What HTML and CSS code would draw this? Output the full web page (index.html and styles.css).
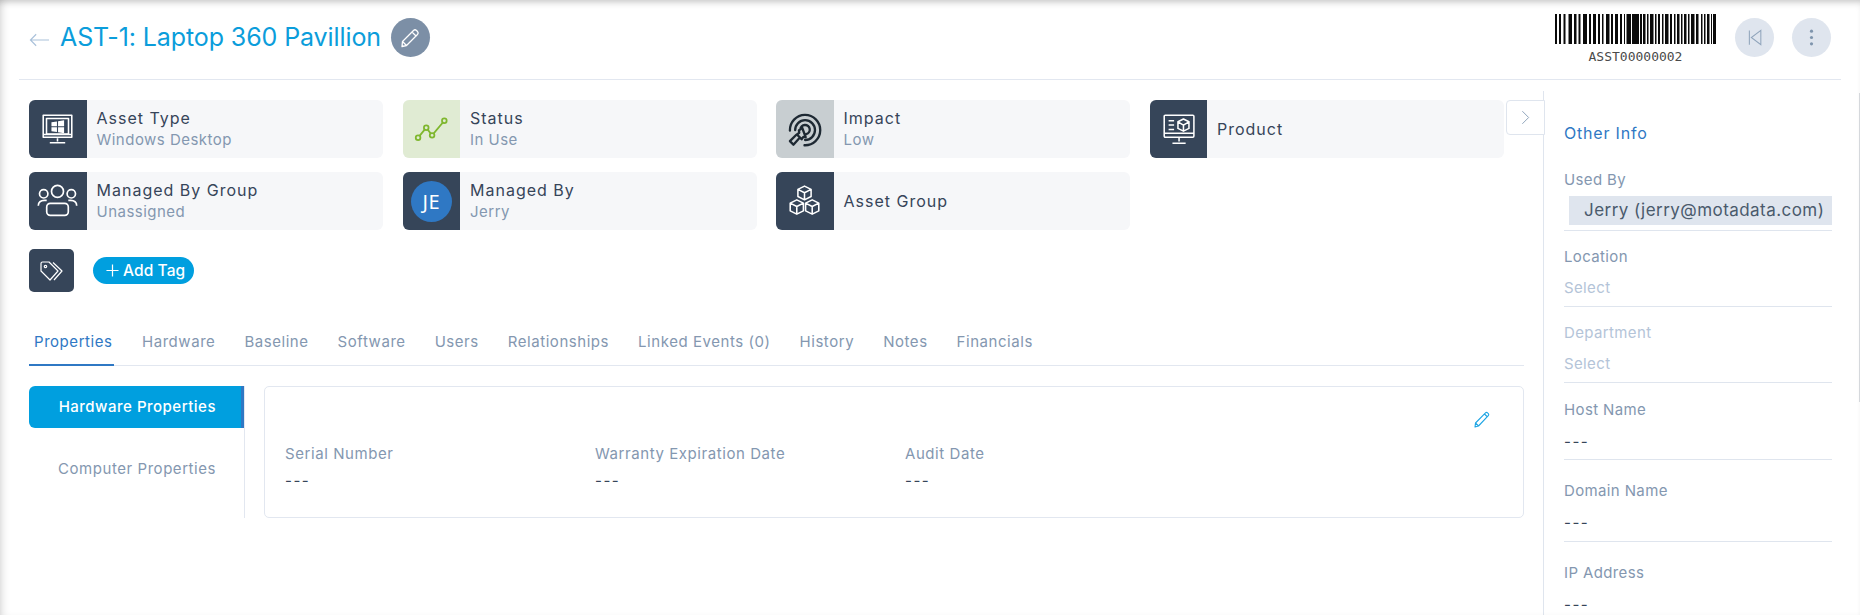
FILE: index.html
```html
<!DOCTYPE html>
<html lang="en">
<head>
<meta charset="utf-8">
<title>AST-1: Laptop 360 Pavillion</title>
<link rel="stylesheet" href="styles.css">
</head>
<body>
<div class="page">
  <header class="header">
    <svg class="back" viewBox="0 0 22 14"><path d="M21 7H1.500M7.500 1 1.500 7l6 6"/></svg>
    <h1 class="title">AST-1: Laptop 360 Pavillion</h1>
    <button class="round edit"><svg viewBox="0 0 24 24"><path d="M4.500 15.500 15.500 4.500a2.200 2.200 0 0 1 3 0l1 1a2.200 2.200 0 0 1 0 3L8.500 19.500 4 20.500zM14 6l4.500 4.500M4.500 15.500l4 4"/></svg></button>
    <div class="spacer"></div>
    <div class="barcode">
      <svg class="bars" viewBox="0 0 161 30" preserveAspectRatio="none"><path d="M0 0h2v30H0zM4 0h2v30H4zM8.500 0h2v30h-2zM13.500 0h3.500v30h-3.500zM19 0h2.500v30H19zM23.500 0h2v30h-2zM28 0h4v30h-4zM34 0h2v30h-2zM38 0h3v30h-3zM43 0h2v30h-2zM47 0h1.500v30H47zM51 0h3.500v30H51zM56 0h2v30h-2zM60 0h3v30h-3zM65 0h2v30h-2zM69 0h1v30h-1zM71.500 0h4.500v30h-4.500zM77 0h7v30h-7zM85 0h2v30h-2zM88 0h2.500v30H88zM92 0h1.500v30H92zM95 0h3.500v30H95zM100 0h1.500v30H100zM103 0h2v30h-2zM107 0h1.500v30H107zM110 0h3.500v30H110zM115 0h2v30h-2zM119 0h1.500v30H119zM122 0h2.500v30H122zM126 0h1.500v30H126zM129 0h2.500v30H129zM133 0h1.500v30H133zM136 0h3.500v30H136zM141 0h2.500v30H141zM146 0h1.500v30H146zM149 0h1.500v30H149zM152 0h2.500v30H152zM156 0h1v30H156zM158 0h3v30H158z"/></svg>
      <div class="code">ASST00000002</div>
    </div>
    <button class="round soft first"><svg viewBox="0 0 24 24"><path d="M5.500 3v18M20 3 8 12l12 9z"/></svg></button>
    <button class="round soft"><svg viewBox="0 0 24 24"><circle class="dot" cx="12" cy="4" r="2"/><circle class="dot" cx="12" cy="12" r="2"/><circle class="dot" cx="12" cy="20" r="2"/></svg></button>
  </header>

  <div class="body">
    <main class="main">
      <button class="collapse"><svg viewBox="0 0 10 16"><path d="m1.500 1 7 7-7 7"/></svg></button>
      <section class="cards">
        <div class="card">
          <div class="ico"><svg viewBox="0 0 30 30"><path d="M2 2h26v20H2zM5 5h20v14H5z" class="ln"/><path d="M2 19.500h26M15 23v3M8 27h14" class="ln"/><path class="fill" d="M9.500 8.500l5-.8V12h-5zM15.500 7.500l5.500-.9V12h-5.500zM9.500 13h5v4.200l-5-.7zM15.500 13H21v5.300l-5.500-.9z"/></svg></div>
          <div class="txt"><div class="name">Asset Type</div><div class="val">Windows Desktop</div></div>
        </div>
        <div class="card">
          <div class="ico green"><svg class="wide" viewBox="0 0 30 30"><path d="M3.500 22 10.500 13.500 15.500 20 26 7.500" class="gl"/><circle class="gc" cx="3.500" cy="22" r="2"/><circle class="gc" cx="10.500" cy="13.500" r="2"/><circle class="gc" cx="15.500" cy="20" r="2"/><circle class="gc" cx="26" cy="7.500" r="2"/></svg></div>
          <div class="txt"><div class="name">Status</div><div class="val">In Use</div></div>
        </div>
        <div class="card">
          <div class="ico grey"><svg class="wide" viewBox="0 0 30 30"><path class="dl" d="M2.500 16A13 13 0 1 1 15 28.500M7 15.500A8.500 8.500 0 1 1 15.500 24M11.500 15A4 4 0 1 1 16.500 19M13 13.500l3 8-2-.2-1.500 2-4-4 2-1.500-.3-2zM8 19.500l-5.500 5.500 3 3 5-5.500"/></svg></div>
          <div class="txt"><div class="name">Impact</div><div class="val">Low</div></div>
        </div>
        <div class="card">
          <div class="ico"><svg viewBox="0 0 30 30"><path class="ln" d="M3 2h25a1 1 0 0 1 1 1v18a1 1 0 0 1-1 1H3a1 1 0 0 1-1-1V3a1 1 0 0 1 1-1zM2 18.500h27M15.500 22v4M9.500 27.500h12M6 7h5M6 11h5M6 15h5M19.500 5.500l5 2.500v6l-5 2.500-5-2.500V8zM14.500 8l5 3 5-3M19.500 11v5.500"/></svg></div>
          <div class="txt"><div class="name">Product</div></div>
        </div>
        <div class="card">
          <div class="ico"><svg class="group" viewBox="0 0 34 30"><circle class="ln" cx="17" cy="7" r="5"/><circle class="ln" cx="5.500" cy="9" r="3.500"/><circle class="ln" cx="28.500" cy="9" r="3.500"/><path class="ln" d="M11 17h12a3 3 0 0 1 3 3v4a3 3 0 0 1-3 3H11a3 3 0 0 1-3-3v-4a3 3 0 0 1 3-3zM1 19c0-3 2-4.500 5-4.500h2M33 19c0-3-2-4.500-5-4.500h-2"/></svg></div>
          <div class="txt"><div class="name">Managed By Group</div><div class="val">Unassigned</div></div>
        </div>
        <div class="card">
          <div class="ico"><span class="avatar">JE</span></div>
          <div class="txt"><div class="name">Managed By</div><div class="val">Jerry</div></div>
        </div>
        <div class="card">
          <div class="ico"><svg viewBox="0 0 30 30"><path class="ln" d="m15 1 6 3v6.500l-6 3-6-3V4zM9 4l6 3 6-3M15 7v6.500M8 13.500l6 3v7l-6 3-6-3v-7zM2 16.500l6 3 6-3M8 19.500v7M22 13.500l6 3v7l-6 3-6-3v-7zM16 16.500l6 3 6-3M22 19.500v7"/></svg></div>
          <div class="txt"><div class="name">Asset Group</div></div>
        </div>
      </section>

      <section class="tags">
        <div class="tagico"><svg viewBox="0 0 26 22"><path class="ln thin" d="M2 3.500A1.500 1.500 0 0 1 3.500 2H10l9 9-8 9-9-9zM14 2.500l9 8.500-8 9"/><circle class="ln thin" cx="6.500" cy="6.500" r="1.200"/></svg></div>
        <button class="addtag"><svg viewBox="0 0 14 14"><path d="M7 .5v13M.5 7h13"/></svg>Add Tag</button>
      </section>

      <nav class="tabs">
        <a class="tab on">Properties</a><a class="tab">Hardware</a><a class="tab">Baseline</a><a class="tab">Software</a><a class="tab">Users</a><a class="tab">Relationships</a><a class="tab">Linked Events (0)</a><a class="tab">History</a><a class="tab">Notes</a><a class="tab">Financials</a>
      </nav>

      <section class="content">
        <div class="side">
          <div class="sideitem active">Hardware Properties</div>
          <div class="sideitem">Computer Properties</div>
        </div>
        <div class="detail">
          <div class="detailtop"><svg class="pencil" viewBox="0 0 16 17"><path d="M1.500 12 11.500 1.800a1.400 1.400 0 0 1 2 0l.8.8a1.400 1.400 0 0 1 0 2L4.500 15l-3.500 1zM1.500 12l3 3M10.500 3l3 3"/></svg></div>
          <div class="fields">
            <div class="field"><div class="flabel">Serial Number</div><div class="fval">---</div></div>
            <div class="field"><div class="flabel">Warranty Expiration Date</div><div class="fval">---</div></div>
            <div class="field"><div class="flabel">Audit Date</div><div class="fval">---</div></div>
          </div>
        </div>
      </section>
    </main>

    <aside class="aside">
      <h2 class="otherinfo">Other Info</h2>
      <div class="usedby"><div class="rlabel">Used By</div><div class="chip">Jerry (jerry@motadata.com)</div></div>
      <div class="row short"><div class="rlabel">Location</div><div class="rval ph">Select</div></div>
      <div class="row short"><div class="rlabel off">Department</div><div class="rval ph">Select</div></div>
      <div class="row mid"><div class="rlabel">Host Name</div><div class="rval">---</div></div>
      <div class="row tall"><div class="rlabel">Domain Name</div><div class="rval">---</div></div>
      <div class="row tall"><div class="rlabel">IP Address</div><div class="rval">---</div></div>
    </aside>
  </div>
  <div class="scrollthumb"></div>
</div>
</body>
</html>
```

FILE: styles.css
```css
* { box-sizing: border-box; }
html, body { margin: 0; padding: 0; height: 100%; background: #fff; }
body { font-family: Inter, "Noto Sans", sans-serif; overflow: hidden; }
button { border: 0; padding: 0; margin: 0; font: inherit; cursor: pointer; }
h1, h2 { margin: 0; font-weight: 400; }

.page { position: relative; width: 1860px; height: 615px; overflow: hidden; padding: 0 19px; background: #fff; }
.page::before { content: ""; position: absolute; inset: 0; pointer-events: none; box-shadow: inset 7px 0 9px -5px rgba(0,0,0,.14), inset 0 6px 7px -4px rgba(0,0,0,.22); }
.scrollthumb { position: absolute; right: 0; top: 93px; width: 1px; height: 309px; background: #d5d8dc; }

.header { display: flex; align-items: flex-start; height: 80px; padding: 18px 10px 0; border-bottom: 1px solid #e2e7f0; }
.back { width: 21px; height: 14px; margin-top: 15px; fill: none; stroke: #a9c1da; stroke-width: 1.200; }
.title { margin: 0 0 0 10px; font-size: 25px; line-height: 39px; font-weight: 400; color: #0b9ddb; letter-spacing: -.1px; white-space: nowrap; }
.round { display: flex; align-items: center; justify-content: center; flex: none; width: 39px; height: 39px; border-radius: 50%; }
.edit { margin-left: 10px; background: #7c8fa6; }
.edit svg { width: 24px; height: 24px; fill: none; stroke: #fff; stroke-width: 1.300; stroke-linejoin: round; }
.spacer { flex: 1; }
.barcode { width: 161px; margin-top: -4px; }
.bars { display: block; width: 161px; height: 30px; fill: #0a0a0a; }
.code { margin-top: 6px; font-family: "DejaVu Sans Mono", "Liberation Mono", monospace; font-size: 13px; line-height: 13px; color: #4a4a4a; text-align: center; white-space: nowrap; }
.soft { background: #dfe5ee; margin-left: 18px; }
.soft.first { margin-left: 19px; }
.soft svg { width: 19px; height: 21px; fill: none; stroke: #8fa4bb; stroke-width: 1.300; }
.soft .dot { fill: #7f95ad; stroke: none; }

.body { display: flex; align-items: flex-start; }
.main { position: relative; flex: none; width: 1505px; margin-left: 10px; }
.aside { flex: none; width: 289px; margin-left: 9px; margin-top: 11px; height: 530px; padding-left: 20px; border-left: 1px solid #dfe5ee; }

.collapse { position: absolute; top: 20px; left: 1477px; width: 39px; height: 35px; background: #fff; border: 1px solid #dfe5ee; border-radius: 4px 0 0 4px; display: flex; align-items: center; justify-content: center; z-index: 1; }
.collapse svg { width: 9px; height: 15px; fill: none; stroke: #8fa4bb; stroke-width: 1.100; }

.cards { display: grid; grid-template-columns: repeat(4, 354px); column-gap: 19.500px; row-gap: 14px; padding-top: 20px; }
.card { display: flex; height: 58px; background: #f6f7f9; border-radius: 6px; overflow: hidden; }
.ico { display: flex; align-items: center; justify-content: center; flex: none; width: 57.500px; background: #364559; }
.ico svg { width: 33px; height: 33px; }
.ico svg.wide { width: 35px; height: 35px; }
.ico svg.group { width: 41px; height: 36px; }
.ico.green { background: #e0ebd3; }
.ico.grey { background: #c8ced1; }
.ln { fill: none; stroke: #fff; stroke-width: 1.400; stroke-linejoin: round; }
.ln.thin { stroke-width: 1.200; }
.fill { fill: #fff; }
.gl { fill: none; stroke: #7fb72e; stroke-width: 1.600; }
.gc { fill: #e0ebd3; stroke: #7fb72e; stroke-width: 1.500; }
.dl { fill: none; stroke: #1e2933; stroke-width: 2; stroke-linejoin: round; stroke-linecap: round; }
.avatar { display: flex; align-items: center; justify-content: center; width: 41px; height: 41px; border-radius: 50%; background: #2f78c4; color: #fff; font-size: 20px; letter-spacing: .5px; font-family: "Noto Sans", sans-serif; }
.txt { display: flex; flex-direction: column; justify-content: center; padding: 0 0 1px 10px; min-width: 0; }
.name { font-size: 16px; line-height: 22px; color: #364559; letter-spacing: 1px; white-space: nowrap; }
.val { font-size: 15px; line-height: 22px; color: #8497b0; letter-spacing: .48px; white-space: nowrap; }

.tags { display: flex; align-items: center; margin-top: 19px; height: 43px; }
.tagico { display: flex; align-items: center; justify-content: center; width: 45px; height: 43px; border-radius: 5px; background: #364559; }
.tagico svg { width: 26px; height: 22px; }
.addtag { display: flex; align-items: center; gap: 4px; margin-left: 19px; height: 27px; padding: 0 9px 0 13px; border-radius: 14px; background: #009fdf; color: #fff; font-size: 15.500px; font-weight: 500; letter-spacing: .1px; white-space: nowrap; }
.addtag svg { width: 13px; height: 13px; fill: none; stroke: #fff; stroke-width: 1.300; }

.tabs { display: flex; width: 1495px; height: 44px; margin-top: 30px; border-bottom: 1px solid #e2e7f0; }
.tab { display: block; padding: 8px 14.500px 0; height: 44px; font-size: 15px; line-height: 24px; color: #8497b0; letter-spacing: .55px; white-space: nowrap; }
.tab:first-child { padding-left: 5px; }
.tab.on { color: #2f78c4; border-bottom: 2px solid #2f78c4; padding-right: 1px; margin-right: 14px; }

.content { display: flex; margin-top: 20px; width: 1495px; }
.side { flex: none; width: 216px; height: 132px; border-right: 1px solid #e2e7f0; }
.sideitem { height: 42px; padding-right: 28px; text-align: right; font-size: 15px; line-height: 42px; color: #8497b0; letter-spacing: .55px; white-space: nowrap; }
.sideitem + .sideitem { margin-top: 20px; }
.active { background: #009fdf; color: #fff; font-weight: 500; letter-spacing: .5px; border-radius: 6px 0 0 6px; border-right: 3px solid #2f78c4; padding-right: 25px; }
.detail { flex: none; width: 1260px; height: 132px; margin-left: 19px; border: 1px solid #e2e7f0; border-radius: 5px; }
.detailtop { display: flex; justify-content: flex-end; height: 56px; padding: 24px 33px 0 0; }
.pencil { width: 16px; height: 17px; fill: none; stroke: #1ea5e4; stroke-width: 1.100; stroke-linejoin: round; }
.fields { display: flex; padding-left: 20px; }
.field { flex: none; width: 310px; }
.flabel { font-size: 15px; line-height: 22px; color: #8497b0; letter-spacing: .57px; white-space: nowrap; }
.fval { margin-top: 5px; font-size: 15px; line-height: 22px; color: #364559; letter-spacing: 1.500px; }

.otherinfo { padding-top: 31px; font-size: 16px; line-height: 22px; color: #2f78c4; letter-spacing: .8px; font-weight: 400; }
.rlabel { font-size: 15px; line-height: 22px; color: #8497b0; letter-spacing: .37px; white-space: nowrap; }
.rlabel.off { color: #b4c4d8; }
.usedby { width: 268px; height: 87px; padding-top: 25px; border-bottom: 1px solid #dfe5ee; }
.chip { margin: 5px 0 0 5px; height: 29px; padding-left: 15px; background: #dfe5ee; font-size: 17px; line-height: 29px; color: #4a5a6c; white-space: nowrap; overflow: hidden; letter-spacing: .45px; }
.row { width: 268px; border-bottom: 1px solid #dfe5ee; }
.short { height: 76px; padding-top: 15px; }
.mid { height: 77px; padding-top: 16px; }
.tall { height: 82px; padding-top: 20px; }
.rval { margin-top: 10px; font-size: 15px; line-height: 22px; color: #364559; letter-spacing: 1.500px; }
.rval.ph { margin-top: 9px; color: #b4c4d8; letter-spacing: .37px; }
```
